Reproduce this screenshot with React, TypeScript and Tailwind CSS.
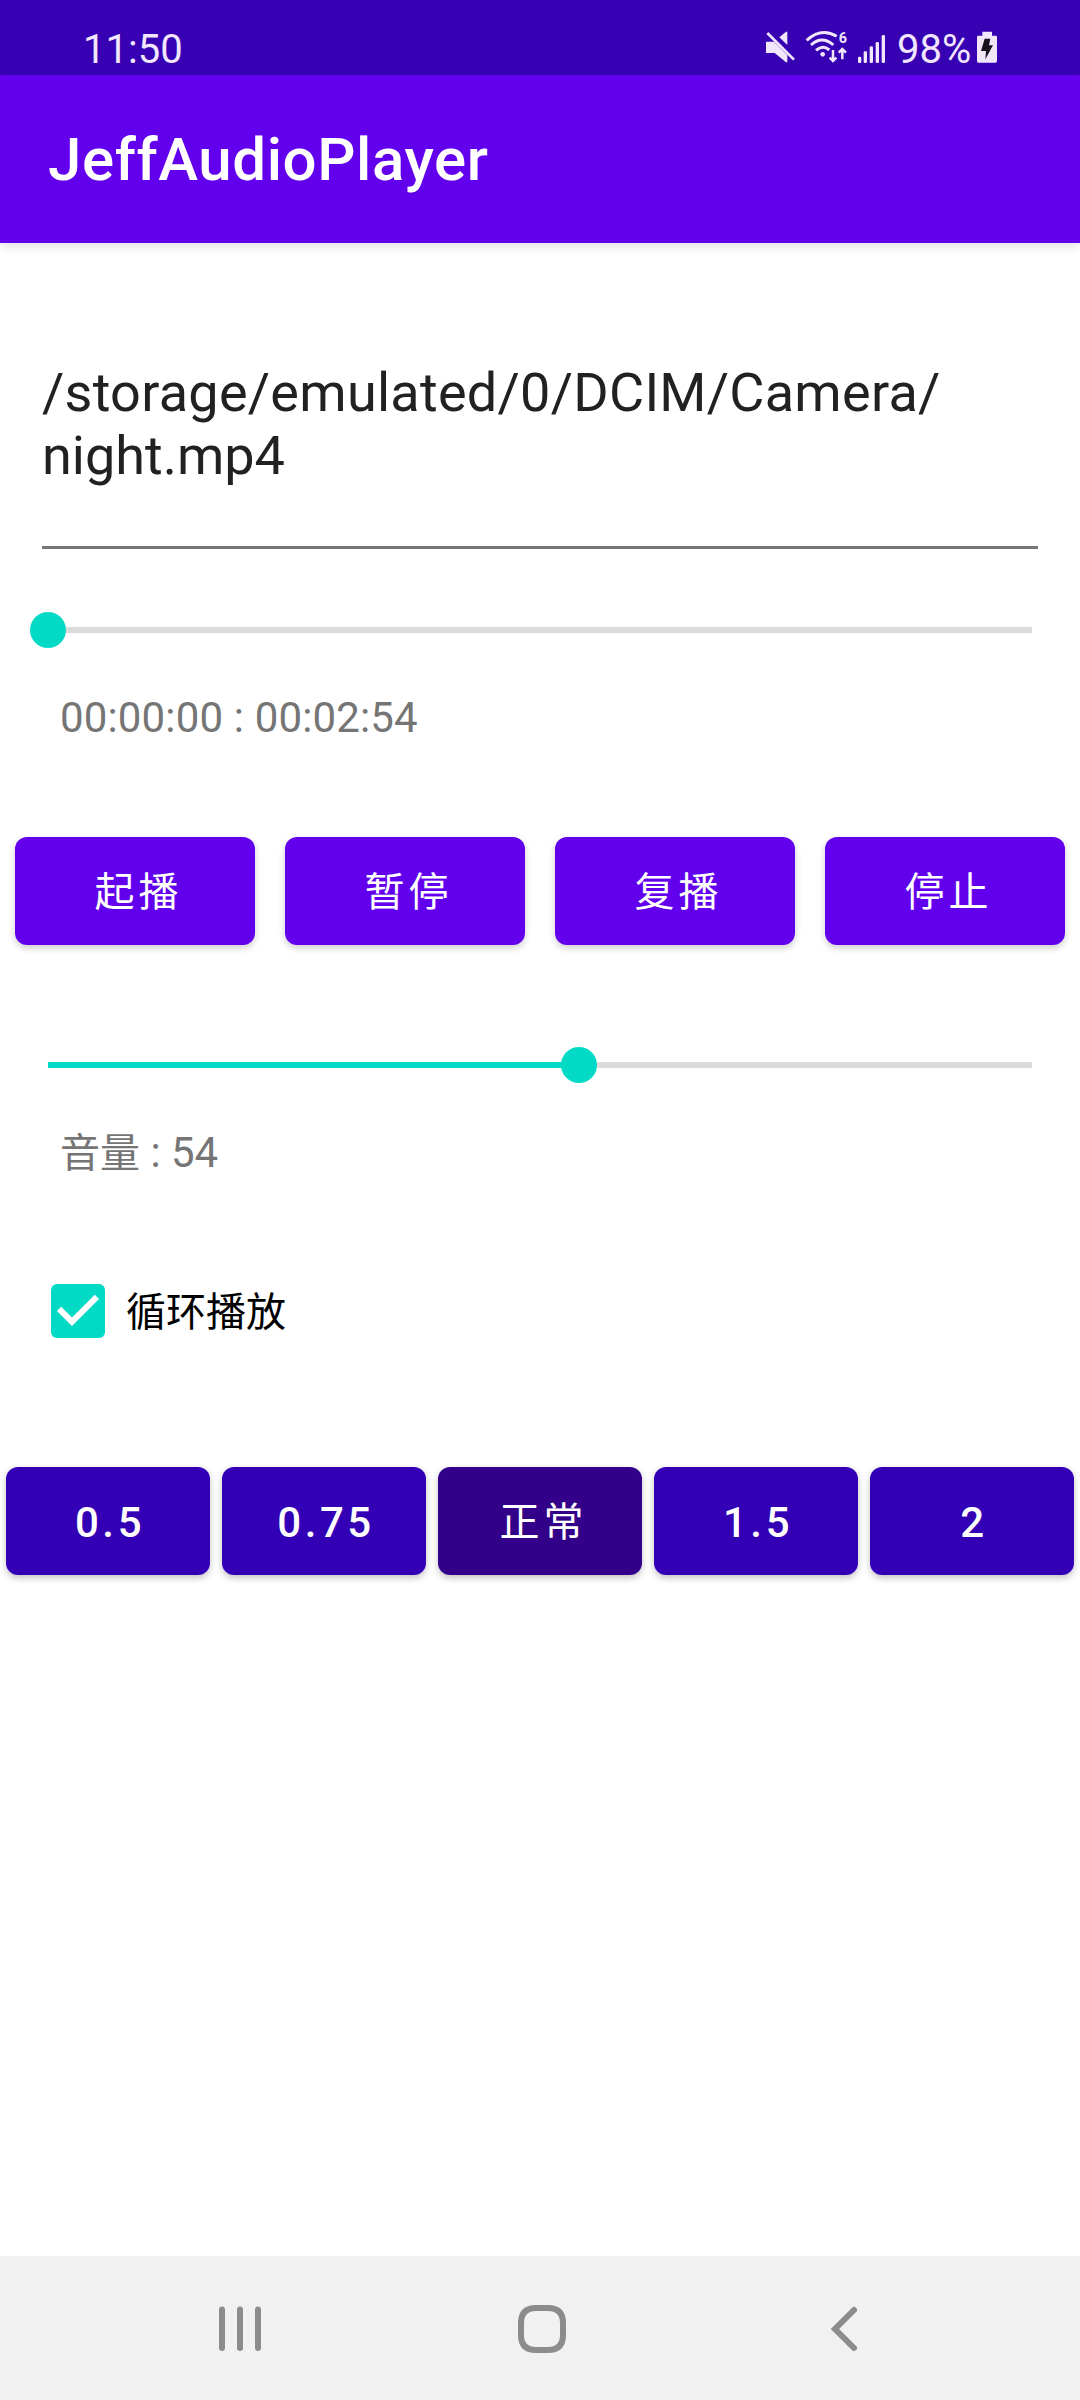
import React from "react";

function MuteIcon() {
  return (
    <svg className="h-8 w-[30px]" viewBox="0 0 90 96" fill="#f1e6fc">
      <path d="M1 32H24L64 72V94H60L26 66H1Q-1 66 -1 63V35Q-1 32 1 32Z" />
      <path d="M40 19L60 2H64V42Z" />
      <path d="M4 6L84 86" stroke="#f1e6fc" strokeWidth="8" />
    </svg>
  );
}

function WifiIcon() {
  return (
    <svg className="h-8 w-[42px] overflow-visible" viewBox="0 0 126 96" fill="none" stroke="#f1e6fc">
      <path d="M2 28Q46 -12 92 16" strokeWidth="9" />
      <path d="M15 42Q48 12 82 42" strokeWidth="9" />
      <path d="M30 58Q50 40 70 57" strokeWidth="9" />
      <circle cx="50" cy="70" r="7" fill="#f1e6fc" stroke="none" />
      <path d="M81 57V90M71 80L81 90L91 80" strokeWidth="7.5" />
      <path d="M109 85V54M98 65L109 54L120 65" strokeWidth="7.5" />
      <text x="98" y="36" fill="#f1e6fc" stroke="none" fontSize="43" fontWeight="700" className="font-['Roboto']">6</text>
    </svg>
  );
}

function SignalIcon() {
  return (
    <svg className="h-7 w-7" viewBox="0 0 84 84" fill="#f1e6fc">
      <rect x="0" y="65" width="10" height="19" rx="4" />
      <rect x="17" y="49" width="10" height="35" rx="4" />
      <rect x="35" y="34" width="10" height="50" rx="4" />
      <rect x="53" y="21" width="10" height="63" rx="4" />
      <rect x="71" y="0" width="10" height="84" rx="4" />
    </svg>
  );
}

function BatteryIcon() {
  return (
    <svg className="h-8 w-5" viewBox="0 0 60 96">
      <path d="M16 2H45V14H56Q60 14 60 18V90Q60 95 55 95H5Q0 95 0 90V18Q0 14 4 14H16Z" fill="#f1e6fc" />
      <path d="M23 23H40L36 43H48L25 85L27 60H12Z" fill="#17131c" />
    </svg>
  );
}

function SeekBar({ value, className }: { value: number; className: string }) {
  return (
    <div className={`relative mx-12 h-1.5 bg-[#dbdbdb] ${className}`}>
      <div className="h-full bg-[#03dac6]" style={{ width: `${value}%` }} />
      <div className="absolute -top-[15px] -ml-[18px] size-9 rounded-full bg-[#03dac6]" style={{ left: `${value}%` }} />
    </div>
  );
}

const actions = ["起播", "暂停", "复播", "停止"];
const speeds = ["0.5", "0.75", "正常", "1.5", "2"];

export default function App() {
  return (
    <div className="flex h-[2400px] w-[1080px] flex-col overflow-hidden bg-white font-['Roboto','Noto_Sans_CJK_SC',sans-serif]">
      <div className="flex h-[75px] shrink-0 items-start bg-[#3700b3] text-[40px] leading-[47px] text-[#f1e6fc]">
        <div className="mt-[26px] ml-[83px] flex-1">11:50</div>
        <div className="mt-[31px] mr-[10px]"><MuteIcon /></div>
        <div className="mt-[31px] mr-[10px]"><WifiIcon /></div>
        <div className="mt-[35px] mr-[11px]"><SignalIcon /></div>
        <div className="mt-[26px] w-[80px]">98%</div>
        <div className="mt-[31px] mr-[83px]"><BatteryIcon /></div>
      </div>
      <header className="flex h-[168px] shrink-0 items-center bg-[#6200ee] px-12 shadow-[0_3px_10px_rgba(0,0,0,0.12)]">
        <h1 className="pt-0.5 text-[60px] leading-[70px] font-medium tracking-[0.6px] text-white">JeffAudioPlayer</h1>
      </header>

      <main className="flex flex-1 flex-col">
        <div className="mx-[42px] mt-[117px] h-[189px] border-b-[3px] border-[#767676] pt-px text-[54px] leading-[63px] text-[#212121]">
          <span className="tracking-[0.27px]">/storage/emulated/0/DCIM/Camera/</span>
          <br />
          night.mp4
        </div>
        <SeekBar value={0} className="mt-[78px]" />
        <div className="mt-[60px] ml-[60px] text-[42px] leading-[49px] tracking-[0.15px] text-[#757575]">00:00:00 : 00:02:54</div>

        <div className="mt-[95px] grid grid-cols-4 gap-[30px] px-[15px]">
          {actions.map((label) => (
            <button key={label} className="h-[108px] rounded-xl bg-[#6200ee] pt-1 pl-[7px] text-[40px] tracking-[4px] text-white shadow-[0_3px_7px_rgba(0,0,0,0.2)]">
              {label}
            </button>
          ))}
        </div>

        <SeekBar value={54} className="mt-[117px]" />
        <div className="mt-[60px] ml-[60px] h-[49px] text-[42px] leading-[49px] text-[#757575]">
          <span className="text-[40px]">音量</span> : 54
        </div>

        <label className="mt-[98px] ml-[42px] flex h-[72px] items-center">
          <svg className="size-[72px]" viewBox="0 0 24 24">
            <rect x="3" y="3" width="18" height="18" rx="2" fill="#03dac6" />
            <path d="M10 17l-5-5 1.41-1.41L10 14.17l7.59-7.59L19 8z" fill="#fff" />
          </svg>
          <span className="ml-3 pt-0.5 text-[40px] leading-[49px] text-black">循环播放</span>
        </label>

        <div className="mt-[120px] grid grid-cols-5 gap-3 px-1.5">
          {speeds.map((label) => (
            <button
              key={label}
              className={`h-[108px] rounded-xl text-white shadow-[0_3px_7px_rgba(0,0,0,0.24)] ${
                label === "正常" ? "bg-[#330089] pt-1 pl-[7px] text-[40px] tracking-[4px]" : "bg-[#3300b5] pt-0.5 pl-1 text-[42px] font-medium tracking-[3.6px]"
              }`}
            >
              {label}
            </button>
          ))}
        </div>
      </main>

      <nav className="flex h-[144px] shrink-0 items-center bg-[#f1f1f1] pt-0.5">
        <svg className="ml-[216px] h-12 w-12" viewBox="0 0 48 48" stroke="#8c8c8c" strokeWidth="6" strokeLinecap="round">
          <path d="M6 4.5V43M24 4.5V43M42 4.5V43" />
        </svg>
        <svg className="ml-[254px] h-12 w-12" viewBox="0 0 48 48" fill="none" stroke="#8c8c8c" strokeWidth="6">
          <path d="M24 3H30Q45 3 45 18V30Q45 45 30 45H18Q3 45 3 30V18Q3 3 18 3Z" />
        </svg>
        <svg className="ml-[262px] h-12 w-8" viewBox="0 0 32 48" fill="none" stroke="#8c8c8c" strokeWidth="6" strokeLinecap="round">
          <path d="M26 5L7 24L26 43" />
        </svg>
      </nav>
    </div>
  );
}
